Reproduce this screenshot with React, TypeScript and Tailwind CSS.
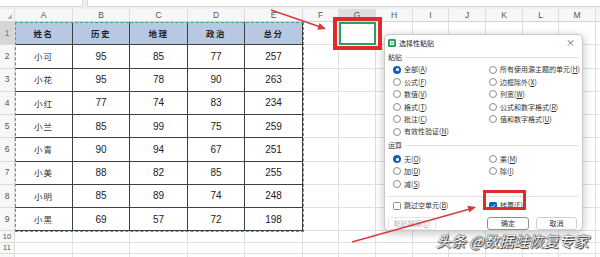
import React from "react";

// 列宽 (px)
const cols = [
  { k: "A", w: 58 },
  { k: "B", w: 57 },
  { k: "C", w: 58 },
  { k: "D", w: 57 },
  { k: "E", w: 58 },
  { k: "F", w: 36 },
  { k: "G", w: 37 },
  { k: "H", w: 37 },
  { k: "I", w: 36 },
  { k: "J", w: 37 },
  { k: "K", w: 37 },
  { k: "L", w: 36 },
  { k: "M", w: 37 },
  { k: "N", w: 40 },
];

const header = ["姓名", "历史", "地理", "政治", "总分"];

const data: (string | number)[][] = [
  ["小可", 95, 85, 77, 257],
  ["小花", 95, 78, 90, 263],
  ["小红", 77, 74, 83, 234],
  ["小兰", 85, 99, 75, 259],
  ["小青", 90, 94, 67, 251],
  ["小美", 88, 82, 85, 255],
  ["小明", 85, 89, 74, 248],
  ["小黑", 69, 57, 72, 198],
];

const cjk = "font-['Noto_Sans_CJK_SC','Noto_Sans',sans-serif]";
const sans = "font-['Liberation_Sans','Noto_Sans_CJK_SC',sans-serif]";

function Opt({ text, k }: { text: string; k: string }) {
  return (
    <span className="whitespace-nowrap">
      {text}(<span className="underline">{k}</span>)
    </span>
  );
}

function Radio({ on, text, k }: { on?: boolean; text: string; k: string }) {
  return (
    <div className="flex items-center gap-[3px] h-[12.4px] pl-[5px]">
      {on ? (
        <span className="w-[8px] h-[8px] shrink-0 rounded-full bg-[#1a5fb4] flex items-center justify-center">
          <span className="w-[3px] h-[3px] rounded-full bg-white" />
        </span>
      ) : (
        <span className="w-[8px] h-[8px] shrink-0 rounded-full border border-[#8c8c8c] bg-white" />
      )}
      <Opt text={text} k={k} />
    </div>
  );
}

function Check({ on, text, k }: { on?: boolean; text: string; k: string }) {
  return (
    <div className="flex items-center gap-[3px]">
      {on ? (
        <span className="w-[8px] h-[8px] shrink-0 rounded-[1.5px] bg-[#1a5fb4] flex items-center justify-center">
          <svg width="6" height="6" viewBox="0 0 6 6">
            <path d="M1 3.1 L2.4 4.5 L5 1.5" stroke="white" strokeWidth="1" fill="none" />
          </svg>
        </span>
      ) : (
        <span className="w-[8px] h-[8px] shrink-0 rounded-[1.5px] border border-[#8c8c8c] bg-white" />
      )}
      <Opt text={text} k={k} />
    </div>
  );
}

function GroupLabel({ text }: { text: string }) {
  return (
    <div className="flex items-center gap-[3px]">
      <span>{text}</span>
      <span className="flex-1 h-px bg-[#e2e2e2]" />
    </div>
  );
}

function Dialog() {
  return (
    <div
      className={`absolute left-[384px] top-[34px] w-[199px] h-[197px] bg-white border border-[#c9c9c9] rounded-[5px] shadow-[0_2px_10px_rgba(0,0,0,0.25)] text-[7px] text-[#333] ${cjk} flex flex-col`}
    >
      {/* 标题栏 */}
      <div className="h-[16px] flex items-center px-[3px] gap-[3px]">
        <svg width="8" height="8" viewBox="0 0 8 8">
          <rect x="0" y="0" width="8" height="8" rx="1.5" fill="#2f9e62" />
          <rect x="2" y="2" width="4" height="4" fill="white" />
          <rect x="2.8" y="3" width="2.4" height="0.6" fill="#2f9e62" />
          <rect x="2.8" y="4.3" width="2.4" height="0.6" fill="#2f9e62" />
        </svg>
        <span className="text-[7px] text-[#222]">选择性粘贴</span>
        <span className="ml-auto mr-[4px] text-[9px] leading-none text-[#555]">×</span>
      </div>

      <div className="px-[3px] flex flex-col">
        {/* 粘贴 */}
        <div className="h-[12.8px] flex flex-col justify-center">
          <GroupLabel text="粘贴" />
        </div>
        <div className="grid grid-cols-[96px_1fr]">
          <div>
            <Radio on text="全部" k="A" />
            <Radio text="公式" k="F" />
            <Radio text="数值" k="V" />
            <Radio text="格式" k="T" />
            <Radio text="批注" k="C" />
            <Radio text="有效性验证" k="N" />
          </div>
          <div>
            <Radio text="所有使用源主题的单元" k="H" />
            <Radio text="边框除外" k="X" />
            <Radio text="列宽" k="W" />
            <Radio text="公式和数字格式" k="R" />
            <Radio text="值和数字格式" k="U" />
          </div>
        </div>

        {/* 运算 */}
        <div className="h-[15px] flex flex-col justify-center">
          <GroupLabel text="运算" />
        </div>
        <div className="grid grid-cols-[96px_1fr]">
          <div>
            <Radio on text="无" k="O" />
            <Radio text="加" k="D" />
            <Radio text="减" k="S" />
          </div>
          <div>
            <Radio text="乘" k="M" />
            <Radio text="除" k="I" />
          </div>
        </div>

        <div className="mt-[6px] h-px bg-[#e2e2e2]" />

        <div className="h-[17px] grid grid-cols-[96px_1fr] items-center">
          <div className="pl-[5px]">
            <Check text="跳过空单元" k="B" />
          </div>
          <div className="pl-[5px]">
            <Check on text="转置" k="E" />
          </div>
        </div>

        {/* 按钮 */}
        <div className="mt-[3px] flex items-center">
          <div className="w-[48px] h-[13px] border border-[#e6e6e6] rounded-[3px] text-[#b5b5b5] flex items-center justify-center">
            <Opt text="粘贴链接" k="L" />
          </div>
          <div className="ml-auto w-[42px] h-[13px] border border-[#8f8f8f] rounded-[3px] flex items-center justify-center">
            确定
          </div>
          <div className="ml-[7px] mr-[2px] w-[41px] h-[13px] border border-[#cfcfcf] rounded-[3px] flex items-center justify-center">
            取消
          </div>
        </div>
      </div>
    </div>
  );
}

export default function App() {
  const rowH = "h-[23.25px]";
  return (
    <div className="relative w-[600px] h-[257px] overflow-hidden bg-white">
      {/* 编辑栏 */}
      <div className="h-[9px] bg-[#efefef] flex gap-[4px] items-start">
        <div className="w-[83px] h-[7px] bg-white border-b border-r border-[#d9d9d9]" />
        <div className="flex-1 h-[7px] bg-white border-b border-l border-[#d9d9d9]" />
      </div>

      {/* 列标 */}
      <div className={`flex h-[13px] bg-[#f7f7f7] border-b border-[#d4d4d4] text-[8.5px] text-[#555] ${sans}`}>
        <div className="w-[15px] shrink-0 border-r border-[#dcdcdc] relative">
          <svg className="absolute right-[2px] bottom-[2px]" width="5" height="5" viewBox="0 0 5 5">
            <polygon points="5,0 5,5 0,5" fill="#b5b5b5" />
          </svg>
        </div>
        {cols.map((c) => (
          <div
            key={c.k}
            style={{ width: c.w }}
            className={`shrink-0 border-r border-[#dcdcdc] flex items-center justify-center ${c.k === "G" ? "bg-[#dedede]" : ""}`}
          >
            {c.k}
          </div>
        ))}
      </div>

      {/* 行 1-9 */}
      {[header, ...data].map((row, ri) => (
        <div key={ri} className={`flex ${rowH}`}>
          <div
            className={`w-[15px] shrink-0 border-r border-b border-[#dcdcdc] flex items-center justify-center text-[8.5px] ${sans} ${ri === 0 ? "bg-[#d6d6d6] text-[#777]" : "bg-[#f7f7f7] text-[#555]"}`}
          >
            {ri + 1}
          </div>
          {cols.map((c, ci) => {
            if (ci < 5) {
              const v = row[ci];
              const isHead = ri === 0;
              const isName = ci === 0 && !isHead;
              return (
                <div
                  key={c.k}
                  style={{ width: c.w }}
                  className={`shrink-0 border-r border-b border-[#404040] flex items-center justify-center ${isHead ? `bg-[#b7c9e2] font-bold text-[8.5px] tracking-[1.5px] text-[#222] ${cjk}` : isName ? `text-[8.5px] tracking-[1px] text-[#333] ${cjk}` : `text-[10px] text-[#222] ${sans}`}`}
                >
                  {v}
                </div>
              );
            }
            return (
              <div
                key={c.k}
                style={{ width: c.w }}
                className={`shrink-0 border-r border-b border-[#e0e0e0] ${ri === 0 && c.k === "G" ? "outline-2 outline-[#21a366] -outline-offset-2" : ""}`}
              />
            );
          })}
        </div>
      ))}

      {/* 行 10-12 */}
      {[10, 11, 12].map((n) => (
        <div key={n} className="flex h-[11.5px]">
          <div className={`w-[15px] shrink-0 border-r border-b border-[#dcdcdc] bg-[#f7f7f7] flex items-center justify-center text-[7.5px] text-[#555] ${sans}`}>
            {n}
          </div>
          {cols.map((c) => (
            <div key={c.k} style={{ width: c.w }} className="shrink-0 border-r border-b border-[#e0e0e0]" />
          ))}
        </div>
      ))}

      {/* 复制选区虚线 */}
      <div className="absolute left-[15px] top-[22px] w-[289px] h-[210px] border border-dashed border-[#3fa57a]" />

      <Dialog />

      {/* 红框标注 */}
      <div className="absolute left-[333px] top-[17px] w-[49px] h-[33px] border-[4px] border-[#e02b2b]" />
      <div className="absolute left-[483px] top-[190px] w-[43px] h-[20px] border-[3px] border-[#e02b2b]" />

      {/* 箭头 */}
      <svg className="absolute inset-0 pointer-events-none" width="600" height="257">
        <line x1="271" y1="10" x2="319" y2="26.5" stroke="#d93b3b" strokeWidth="1.5" />
        <polygon points="326,29 317.3,29.7 319.5,23.1" fill="#d93b3b" />
        <line x1="352" y1="242" x2="469" y2="209.2" stroke="#d93b3b" strokeWidth="1.5" />
        <polygon points="476,207 469.25,212.57 467.35,205.83" fill="#d93b3b" />
      </svg>

      {/* 水印 */}
      <div
        className={`absolute left-[436px] top-[233px] text-[15px] leading-none italic text-white whitespace-nowrap ${cjk} [text-shadow:0_0_1px_#222,0_0_1px_#222,1px_1px_1px_#222]`}
      >
        头条 @数据蛙恢复专家
      </div>
    </div>
  );
}
